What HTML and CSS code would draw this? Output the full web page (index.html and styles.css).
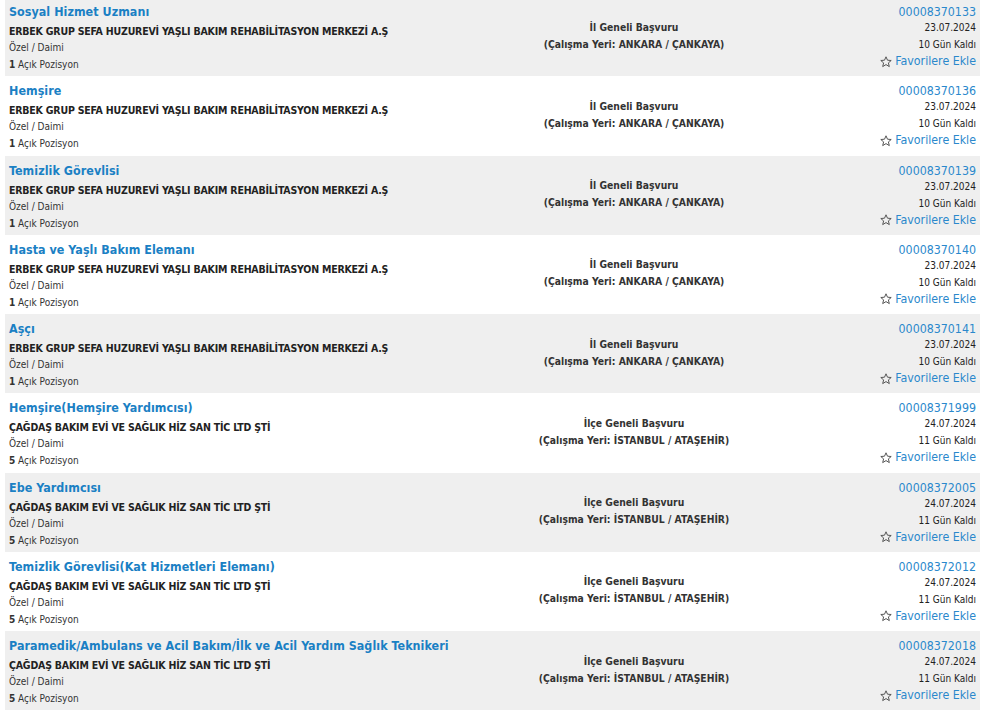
FILE: index.html
```html
<!DOCTYPE html>
<html lang="tr">
<head>
<meta charset="utf-8">
<title>İlanlar</title>
<link rel="stylesheet" href="styles.css">
</head>
<body>
<div class="list">
  <div class="row">
    <div class="left"><a class="title">Sosyal Hizmet Uzmanı</a><div class="company">ERBEK GRUP SEFA HUZUREVİ YAŞLI BAKIM REHABİLİTASYON MERKEZİ A.Ş</div><div class="meta">Özel / Daimi</div><div class="meta"><b>1</b> Açık Pozisyon</div></div>
    <div class="mid"><div>İl Geneli Başvuru</div><div>(Çalışma Yeri: ANKARA / ÇANKAYA)</div></div>
    <div class="right"><a class="id">00008370133</a><div class="small">23.07.2024</div><div class="small">10 Gün Kaldı</div><a class="fav"><svg class="star" viewBox="0 0 12 12"><path d="M6 0.8 L7.5 4.2 L11.2 4.5 L8.4 6.9 L9.3 10.6 L6 8.6 L2.7 10.6 L3.6 6.9 L0.8 4.5 L4.5 4.2 Z"/></svg>Favorilere Ekle</a></div>
  </div>
  <div class="row">
    <div class="left"><a class="title">Hemşire</a><div class="company">ERBEK GRUP SEFA HUZUREVİ YAŞLI BAKIM REHABİLİTASYON MERKEZİ A.Ş</div><div class="meta">Özel / Daimi</div><div class="meta"><b>1</b> Açık Pozisyon</div></div>
    <div class="mid"><div>İl Geneli Başvuru</div><div>(Çalışma Yeri: ANKARA / ÇANKAYA)</div></div>
    <div class="right"><a class="id">00008370136</a><div class="small">23.07.2024</div><div class="small">10 Gün Kaldı</div><a class="fav"><svg class="star" viewBox="0 0 12 12"><path d="M6 0.8 L7.5 4.2 L11.2 4.5 L8.4 6.9 L9.3 10.6 L6 8.6 L2.7 10.6 L3.6 6.9 L0.8 4.5 L4.5 4.2 Z"/></svg>Favorilere Ekle</a></div>
  </div>
  <div class="row">
    <div class="left"><a class="title">Temizlik Görevlisi</a><div class="company">ERBEK GRUP SEFA HUZUREVİ YAŞLI BAKIM REHABİLİTASYON MERKEZİ A.Ş</div><div class="meta">Özel / Daimi</div><div class="meta"><b>1</b> Açık Pozisyon</div></div>
    <div class="mid"><div>İl Geneli Başvuru</div><div>(Çalışma Yeri: ANKARA / ÇANKAYA)</div></div>
    <div class="right"><a class="id">00008370139</a><div class="small">23.07.2024</div><div class="small">10 Gün Kaldı</div><a class="fav"><svg class="star" viewBox="0 0 12 12"><path d="M6 0.8 L7.5 4.2 L11.2 4.5 L8.4 6.9 L9.3 10.6 L6 8.6 L2.7 10.6 L3.6 6.9 L0.8 4.5 L4.5 4.2 Z"/></svg>Favorilere Ekle</a></div>
  </div>
  <div class="row">
    <div class="left"><a class="title">Hasta ve Yaşlı Bakım Elemanı</a><div class="company">ERBEK GRUP SEFA HUZUREVİ YAŞLI BAKIM REHABİLİTASYON MERKEZİ A.Ş</div><div class="meta">Özel / Daimi</div><div class="meta"><b>1</b> Açık Pozisyon</div></div>
    <div class="mid"><div>İl Geneli Başvuru</div><div>(Çalışma Yeri: ANKARA / ÇANKAYA)</div></div>
    <div class="right"><a class="id">00008370140</a><div class="small">23.07.2024</div><div class="small">10 Gün Kaldı</div><a class="fav"><svg class="star" viewBox="0 0 12 12"><path d="M6 0.8 L7.5 4.2 L11.2 4.5 L8.4 6.9 L9.3 10.6 L6 8.6 L2.7 10.6 L3.6 6.9 L0.8 4.5 L4.5 4.2 Z"/></svg>Favorilere Ekle</a></div>
  </div>
  <div class="row">
    <div class="left"><a class="title">Aşçı</a><div class="company">ERBEK GRUP SEFA HUZUREVİ YAŞLI BAKIM REHABİLİTASYON MERKEZİ A.Ş</div><div class="meta">Özel / Daimi</div><div class="meta"><b>1</b> Açık Pozisyon</div></div>
    <div class="mid"><div>İl Geneli Başvuru</div><div>(Çalışma Yeri: ANKARA / ÇANKAYA)</div></div>
    <div class="right"><a class="id">00008370141</a><div class="small">23.07.2024</div><div class="small">10 Gün Kaldı</div><a class="fav"><svg class="star" viewBox="0 0 12 12"><path d="M6 0.8 L7.5 4.2 L11.2 4.5 L8.4 6.9 L9.3 10.6 L6 8.6 L2.7 10.6 L3.6 6.9 L0.8 4.5 L4.5 4.2 Z"/></svg>Favorilere Ekle</a></div>
  </div>
  <div class="row">
    <div class="left"><a class="title">Hemşire(Hemşire Yardımcısı)</a><div class="company">ÇAĞDAŞ BAKIM EVİ VE SAĞLIK HİZ SAN TİC LTD ŞTİ</div><div class="meta">Özel / Daimi</div><div class="meta"><b>5</b> Açık Pozisyon</div></div>
    <div class="mid"><div>İlçe Geneli Başvuru</div><div>(Çalışma Yeri: İSTANBUL / ATAŞEHİR)</div></div>
    <div class="right"><a class="id">00008371999</a><div class="small">24.07.2024</div><div class="small">11 Gün Kaldı</div><a class="fav"><svg class="star" viewBox="0 0 12 12"><path d="M6 0.8 L7.5 4.2 L11.2 4.5 L8.4 6.9 L9.3 10.6 L6 8.6 L2.7 10.6 L3.6 6.9 L0.8 4.5 L4.5 4.2 Z"/></svg>Favorilere Ekle</a></div>
  </div>
  <div class="row">
    <div class="left"><a class="title">Ebe Yardımcısı</a><div class="company">ÇAĞDAŞ BAKIM EVİ VE SAĞLIK HİZ SAN TİC LTD ŞTİ</div><div class="meta">Özel / Daimi</div><div class="meta"><b>5</b> Açık Pozisyon</div></div>
    <div class="mid"><div>İlçe Geneli Başvuru</div><div>(Çalışma Yeri: İSTANBUL / ATAŞEHİR)</div></div>
    <div class="right"><a class="id">00008372005</a><div class="small">24.07.2024</div><div class="small">11 Gün Kaldı</div><a class="fav"><svg class="star" viewBox="0 0 12 12"><path d="M6 0.8 L7.5 4.2 L11.2 4.5 L8.4 6.9 L9.3 10.6 L6 8.6 L2.7 10.6 L3.6 6.9 L0.8 4.5 L4.5 4.2 Z"/></svg>Favorilere Ekle</a></div>
  </div>
  <div class="row">
    <div class="left"><a class="title">Temizlik Görevlisi(Kat Hizmetleri Elemanı)</a><div class="company">ÇAĞDAŞ BAKIM EVİ VE SAĞLIK HİZ SAN TİC LTD ŞTİ</div><div class="meta">Özel / Daimi</div><div class="meta"><b>5</b> Açık Pozisyon</div></div>
    <div class="mid"><div>İlçe Geneli Başvuru</div><div>(Çalışma Yeri: İSTANBUL / ATAŞEHİR)</div></div>
    <div class="right"><a class="id">00008372012</a><div class="small">24.07.2024</div><div class="small">11 Gün Kaldı</div><a class="fav"><svg class="star" viewBox="0 0 12 12"><path d="M6 0.8 L7.5 4.2 L11.2 4.5 L8.4 6.9 L9.3 10.6 L6 8.6 L2.7 10.6 L3.6 6.9 L0.8 4.5 L4.5 4.2 Z"/></svg>Favorilere Ekle</a></div>
  </div>
  <div class="row">
    <div class="left"><a class="title">Paramedik/Ambulans ve Acil Bakım/İlk ve Acil Yardım Sağlık Teknikeri</a><div class="company">ÇAĞDAŞ BAKIM EVİ VE SAĞLIK HİZ SAN TİC LTD ŞTİ</div><div class="meta">Özel / Daimi</div><div class="meta"><b>5</b> Açık Pozisyon</div></div>
    <div class="mid"><div>İlçe Geneli Başvuru</div><div>(Çalışma Yeri: İSTANBUL / ATAŞEHİR)</div></div>
    <div class="right"><a class="id">00008372018</a><div class="small">24.07.2024</div><div class="small">11 Gün Kaldı</div><a class="fav"><svg class="star" viewBox="0 0 12 12"><path d="M6 0.8 L7.5 4.2 L11.2 4.5 L8.4 6.9 L9.3 10.6 L6 8.6 L2.7 10.6 L3.6 6.9 L0.8 4.5 L4.5 4.2 Z"/></svg>Favorilere Ekle</a></div>
  </div>
</div>
</body>
</html>
```
FILE: styles.css
```css
html, body {
  margin: 0;
  padding: 0;
  background: #ffffff;
}
body {
  font-family: "DejaVu Sans Condensed", "DejaVu Sans", Verdana, sans-serif;
  color: #222;
  overflow: hidden;
}
.list {
  margin: -3px 5px 0 5px;
}
.row {
  display: grid;
  grid-template-columns: 500px 258px 1fr;
  height: 79.25px;
  box-sizing: border-box;
  background: #fff;
}
.row:nth-child(odd) {
  background: #efefef;
}
.left {
  display: flex;
  flex-direction: column;
  padding: 6px 0 0 4px;
}
.title {
  font-size: 12.4px;
  letter-spacing: 0.05px;
  font-weight: bold;
  color: #1a80c4;
  line-height: 18px;
  white-space: nowrap;
}
.company {
  margin-top: 2px;
  font-size: 10.5px;
  letter-spacing: -0.2px;
  font-weight: bold;
  color: #222;
  line-height: 16px;
  white-space: nowrap;
}
.meta {
  font-size: 10px;
  color: #333;
  line-height: 17px;
}
.meta b {
  font-weight: bold;
}
.mid {
  display: flex;
  flex-direction: column;
  align-items: center;
  justify-content: center;
  font-size: 10.3px;
  font-weight: bold;
  color: #333;
  line-height: 17px;
  padding-bottom: 2px;
  white-space: nowrap;
}
.right {
  display: flex;
  flex-direction: column;
  align-items: flex-end;
  padding: 8px 4px 0 0;
}
.id {
  font-size: 12.3px;
  color: #2a88cc;
  line-height: 14px;
}
.small {
  font-size: 10px;
  color: #222;
  line-height: 17px;
}
.fav {
  display: flex;
  align-items: center;
  gap: 3px;
  font-size: 12.3px;
  color: #2a88cc;
  line-height: 17px;
}
.star {
  width: 12px;
  height: 12px;
  fill: none;
  stroke: #555;
  stroke-width: 1;
  stroke-linejoin: round;
}
```
